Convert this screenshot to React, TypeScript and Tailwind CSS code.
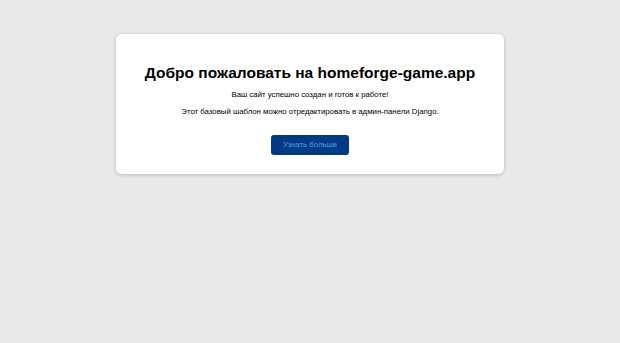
export default function App() {
  return (
    <div className="min-h-[343px] w-full bg-[#e9e9e9] pt-[34px] flex flex-col items-center" style={{ fontFamily: '"Liberation Sans", Arial, sans-serif' }}>
      <div className="w-[388px] h-[140px] bg-white rounded-[6px] shadow-[0_1px_4px_rgba(0,0,0,0.2)] flex flex-col items-center pt-[28px]">
        <h1 className="text-[15.5px] leading-[22px] font-bold text-black">Добро пожаловать на homeforge-game.app</h1>
        <p className="mt-[5px] text-[7.8px] leading-[12px] text-black">Ваш сайт успешно создан и готов к работе!</p>
        <p className="mt-[5px] text-[7.8px] leading-[12px] text-black">Этот базовый шаблон можно отредактировать в админ-панели Django.</p>
        <button className="mt-[17px] w-[78px] h-[20px] rounded-[3px] bg-[#003a85] text-[#4fa3e0] text-[7.8px]">Узнать больше</button>
      </div>
    </div>
  );
}
